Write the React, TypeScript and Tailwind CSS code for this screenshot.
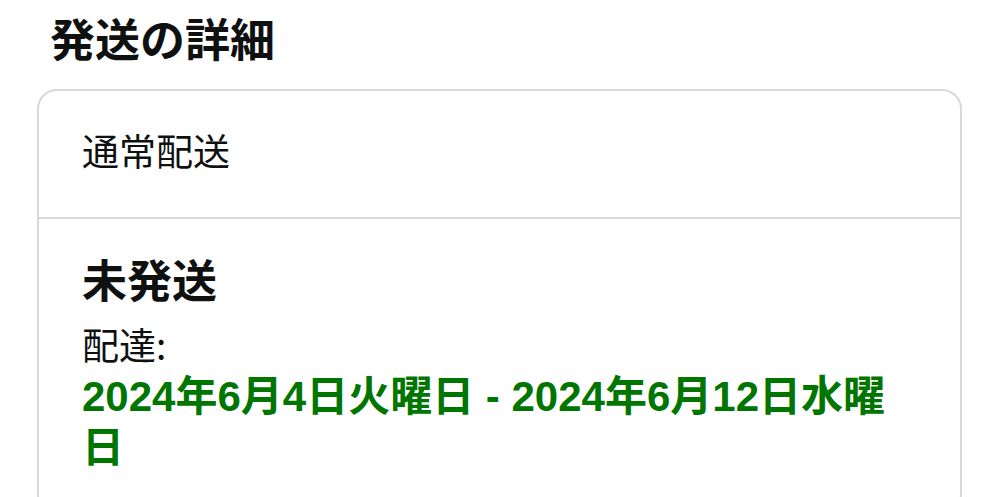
export default function App() {
	return (
		<div
			className="min-h-screen bg-white pt-[9px] text-[#0f1111]"
			style={{ fontFamily: '"Noto Sans CJK JP", "Noto Sans", sans-serif' }}
		>
			<h1 className="pl-[50px] text-[45px] font-bold leading-[58px]">発送の詳細</h1>

			<div className="mx-[37px] mt-[22px] rounded-[20px] border-2 border-[#d5d9d9]">
				<div className="px-[43px] pt-[35px] pb-[42px]">
					<p className="text-[37px] leading-[49px]">通常配送</p>
				</div>
				<div className="border-t-2 border-[#d5d9d9] px-[43px] pt-[32px] pb-[40px]">
					<h2 className="text-[45px] font-bold leading-[56px]">未発送</h2>
					<p className="mt-[13px] text-[37px] leading-[49px]">配達:</p>
					<p
						className="mt-[2px] text-[42px] font-bold leading-[51px] text-[#007600]"
						style={{ fontFamily: '"Liberation Sans", "Noto Sans CJK JP", sans-serif' }}
					>
						2024年6月4日火曜日 - 2024年6月12日水曜日
					</p>
				</div>
			</div>
		</div>
	);
}
